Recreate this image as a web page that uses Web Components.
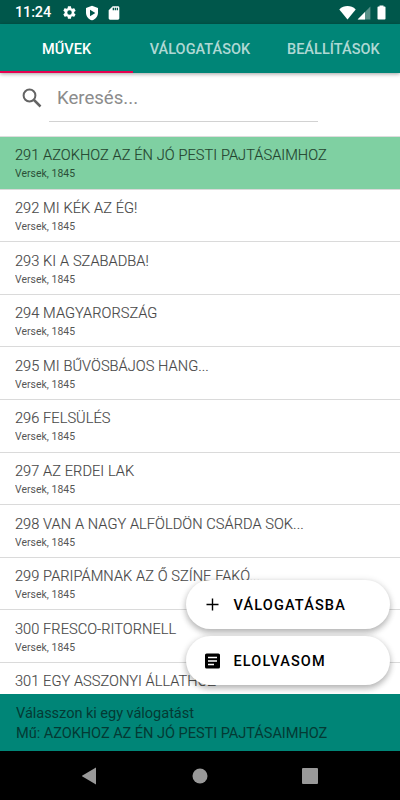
<!DOCTYPE html>
<html lang="hu"><head><meta charset="utf-8"><title>Művek</title>
<style>
html,body{margin:0;height:800px;overflow:hidden;background:#fff}
body{font-family:Roboto,"Liberation Sans",sans-serif}
</style></head><body>
<poem-app></poem-app>
<script>
const define = (name, html) => customElements.define(name, class extends HTMLElement {
  constructor() {
    super();
    const t = document.createElement('template');
    t.innerHTML = html;
    this.attachShadow({ mode: 'open' }).append(t.content.cloneNode(true));
  }
});

define('status-bar', `<style>
:host{display:flex;box-sizing:border-box;height:24px;background:#00574b;color:#fff;align-items:center;padding:1px 13px 0 15px}
time{font-size:14.500px;line-height:24px;padding-top:1px;font-weight:500;width:47px;white-space:nowrap;letter-spacing:-.15px}
svg{display:block;fill:#fff}
.space{flex:1}
</style>
<time>11:24</time>
<svg width="15" height="15" viewBox="0 0 24 24"><path d="M19.4 13c0-.3.1-.6.1-1s0-.7-.1-1l2.1-1.600c.2-.2.3-.4.1-.6l-2-3.500c-.1-.2-.4-.3-.6-.2l-2.500 1c-.5-.4-1.100-.7-1.700-1l-.4-2.600c0-.3-.2-.5-.5-.5h-4c-.2 0-.4.200-.5.4l-.4 2.700c-.6.2-1.100.6-1.700.9l-2.500-1c-.2-.1-.5 0-.6.2l-2 3.500c-.1.200-.1.500.1.600l2.100 1.700c0 .3-.1.600-.1 1s0 .7.1 1l-2.100 1.600c-.2.200-.3.400-.1.600l2 3.500c.1.200.4.300.6.200l2.500-1c.5.4 1.100.7 1.700 1l.4 2.600c0 .3.2.4.500.4h4c.3 0 .5-.2.500-.4l.4-2.600c.6-.3 1.200-.6 1.700-1l2.500 1c.2.100.5 0 .6-.2l2-3.500c.1-.2.100-.5-.1-.6zM12 15.600A3.600 3.600 0 1 1 12 8.400a3.600 3.600 0 0 1 0 7.200z"/></svg>
<svg width="16" height="16" viewBox="0 0 24 24" style="margin-left:7px"><path fill-rule="evenodd" d="M12 1 3 4.500v7c0 5.500 3.800 10 9 11.500 5.200-1.500 9-6 9-11.500v-7zM9 7l8 5-8 5z"/></svg>
<svg width="16" height="16" viewBox="0 0 24 24" style="margin-left:6px"><path fill-rule="evenodd" d="M18 2h-8L4 8v12c0 1.100.9 2 2 2h12c1.100 0 2-.9 2-2V4c0-1.100-.9-2-2-2zm-6 6h-2V4h2zm3 0h-2V4h2zm3 0h-2V4h2z"/></svg>
<span class="space"></span>
<svg width="17" height="14" viewBox="0 0 17 14"><path d="M.3 3.400C5-1 12-1 16.700 3.400L8.500 13.400z"/></svg>
<svg width="14" height="14" viewBox="0 0 14 14" style="margin-left:1px"><path opacity=".35" d="M13.400.6v12.800H.6z"/><path d="M8 6v7.400H.6z"/></svg>
<svg width="9" height="15" viewBox="0 0 9 15" style="margin:0 1px 0 6px"><path d="M2.500 1.500V.4h4v1.100h1.200c.5 0 .8.300.8.800v11.400c0 .5-.3.800-.8.800H1.300c-.5 0-.8-.3-.8-.8V2.300c0-.5.300-.8.800-.8z"/></svg>`);

define('tab-item', `<style>
:host{flex:1;display:flex;box-sizing:border-box;align-items:center;justify-content:center;height:49px;padding-top:3px;border-bottom:2px solid transparent;color:rgba(255,255,255,.7);font-size:14.500px;font-weight:500;letter-spacing:.05px;white-space:nowrap}
:host([active]){color:#fff;border-color:#e60050}
</style><slot></slot>`);

define('tab-bar', `<style>
:host{display:flex;height:49px;background:#008577;box-shadow:0 1px 4px rgba(0,0,0,.38);position:relative;z-index:1}
</style><slot></slot>`);

define('search-field', `<style>
:host{display:flex;box-sizing:border-box;height:64px;padding:5px 82px 0 22px;border-bottom:1px solid #ddd;align-items:flex-start}
svg{width:20px;height:20px;margin:10px 7px 0 0}
.field{flex:1;height:43px;border-bottom:1px solid #d2d2d2;padding-left:8px;color:#8c8c8c;font-size:18.600px;line-height:41px}
</style>
<svg viewBox="0 0 20 20" fill="none" stroke="#646464" stroke-width="2"><circle cx="7.500" cy="7.500" r="5.900"/><path stroke-width="2.500" d="m12 12 6.500 6.500"/></svg>
<div class="field"><slot></slot></div>`);

define('poem-row', `<style>
:host{display:block;box-sizing:border-box;height:52.600px;padding:7.400px 15px 0;border-bottom:1px solid #dadada;color:#484848;white-space:nowrap}
:host([selected]){background:#7fd0a2;color:#24442f}
.title{font-size:14.600px;line-height:22px;font-weight:300;letter-spacing:.03px;word-spacing:.15px;-webkit-text-stroke:.15px currentColor}
.sub{font-size:10.400px;line-height:15px;letter-spacing:.04px;opacity:.92}
:host([last]) .sub{display:none}
</style><div class="title"><slot></slot></div><div class="sub">Versek, 1845</div>`);

define('action-pill', `<style>
:host{display:flex;box-sizing:border-box;width:204px;height:49px;border-radius:25px;background:#fff;color:#000;align-items:center;padding-left:17px;box-shadow:0 4px 6px rgba(0,0,0,.2),0 1px 7px rgba(0,0,0,.16);font-size:14.500px;font-weight:500;letter-spacing:1.150px}
span{margin-left:12.500px;padding-top:1px}
::slotted(svg){display:block}
</style><slot name="icon"></slot><span><slot></slot></span>`);

define('selection-panel', `<style>
:host{display:block;box-sizing:border-box;height:57px;background:#008577;color:#043a34;padding:10px 16px;font-size:14.600px;letter-spacing:-.06px;line-height:19.500px;white-space:nowrap;position:relative}
</style><slot></slot>`);

define('nav-bar', `<style>
:host{display:flex;height:49px;background:#000;align-items:center;justify-content:space-around;padding:0 35px}
svg{display:block;fill:#999}
</style>
<svg width="16" height="18" viewBox="1 0 16 18"><path d="M.5 9 15 .5v17z"/></svg>
<svg width="16" height="16" viewBox="0 0 16 16"><circle cx="8" cy="8" r="7.500"/></svg>
<svg width="16" height="16" viewBox="0 0 16 16"><rect width="16" height="16" rx="1"/></svg>`);

define('poem-app', `<style>
:host{display:flex;flex-direction:column;height:800px;width:400px;background:#fff}
main{flex:1;min-height:0;overflow:hidden}
nav-bar svg{overflow:visible}
.actions{position:absolute;left:186px;top:580px;display:flex;flex-direction:column;gap:7px}
.clip{position:absolute;left:0;top:0;width:400px;height:694px;overflow:hidden;pointer-events:none}
</style>
<status-bar></status-bar>
<tab-bar><tab-item active>MŰVEK</tab-item><tab-item>VÁLOGATÁSOK</tab-item><tab-item>BEÁLLÍTÁSOK</tab-item></tab-bar>
<search-field>Keresés...</search-field>
<main>
<poem-row selected>291 AZOKHOZ AZ ÉN JÓ PESTI PAJTÁSAIMHOZ</poem-row>
<poem-row>292 MI KÉK AZ ÉG!</poem-row>
<poem-row>293 KI A SZABADBA!</poem-row>
<poem-row>294 MAGYARORSZÁG</poem-row>
<poem-row>295 MI BŰVÖSBÁJOS HANG...</poem-row>
<poem-row>296 FELSÜLÉS</poem-row>
<poem-row>297 AZ ERDEI LAK</poem-row>
<poem-row>298 VAN A NAGY ALFÖLDÖN CSÁRDA SOK...</poem-row>
<poem-row>299 PARIPÁMNAK AZ Ő SZÍNE FAKÓ...</poem-row>
<poem-row>300 FRESCO-RITORNELL</poem-row>
<poem-row last>301 EGY ASSZONYI ÁLLATHOZ</poem-row>
</main>
<selection-panel>Válasszon ki egy válogatást<br>Mű: AZOKHOZ AZ ÉN JÓ PESTI PAJTÁSAIMHOZ</selection-panel>
<nav-bar></nav-bar>
<div class="clip"><div class="actions">
<action-pill><svg slot="icon" width="18" height="18" viewBox="0 0 18 18"><path d="M3.500 8.500h12M9.500 2.500v12" stroke="#000" stroke-width="1.400" fill="none"/></svg>VÁLOGATÁSBA</action-pill>
<action-pill><svg slot="icon" width="18" height="18" viewBox="0 0 18 18"><rect x="2" y="1.500" width="15" height="15" rx="1.600"/><path d="M5 5.500h9M5 9h9M5 12.500h6" stroke="#fff" stroke-width="1.500"/></svg>ELOLVASOM</action-pill>
</div></div>`);
</script>
</body></html>
